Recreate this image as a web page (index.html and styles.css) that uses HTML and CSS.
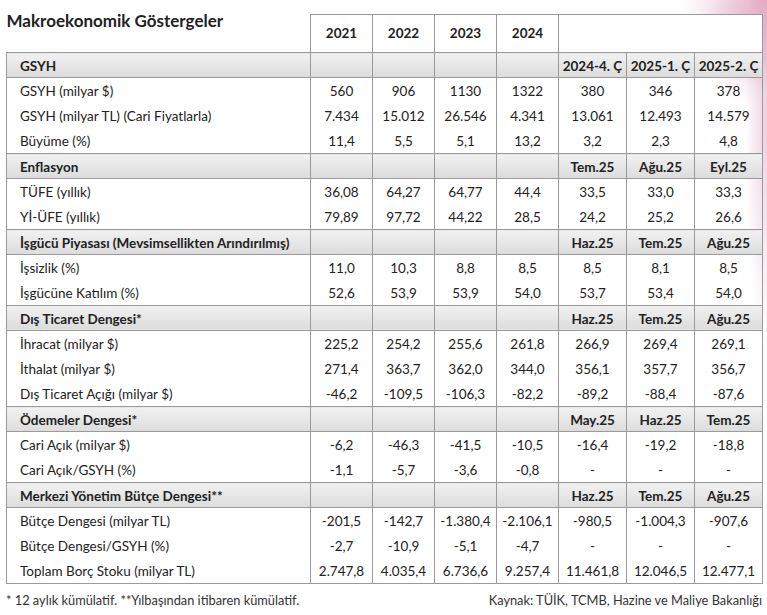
FILE: index.html
```html
<!DOCTYPE html>
<html lang="tr">
<head>
<meta charset="utf-8">
<title>Makroekonomik Göstergeler</title>
<link rel="stylesheet" href="styles.css">
</head>
<body>
<div class="page">
  <div class="deco"></div>
  <table class="macro">
    <colgroup>
      <col class="c-label">
      <col class="c-year"><col class="c-year"><col class="c-year"><col class="c-year">
      <col class="c-q"><col class="c-q"><col class="c-q">
    </colgroup>
    <thead>
      <tr class="years">
        <th class="title-cell"><h1 class="title">Makroekonomik Göstergeler</h1></th>
        <th>2021</th><th>2022</th><th>2023</th><th>2024</th>
        <th colspan="3"></th>
      </tr>
    </thead>
    <tbody>
      <tr class="sec"><th>GSYH</th><td></td><td></td><td></td><td></td><td>2024-4. Ç</td><td>2025-1. Ç</td><td>2025-2. Ç</td></tr>
      <tr><th>GSYH (milyar $)</th><td>560</td><td>906</td><td>1130</td><td>1322</td><td>380</td><td>346</td><td>378</td></tr>
      <tr><th>GSYH (milyar TL) (Cari Fiyatlarla)</th><td>7.434</td><td>15.012</td><td>26.546</td><td>4.341</td><td>13.061</td><td>12.493</td><td>14.579</td></tr>
      <tr><th>Büyüme (%)</th><td>11,4</td><td>5,5</td><td>5,1</td><td>13,2</td><td>3,2</td><td>2,3</td><td>4,8</td></tr>

      <tr class="sec"><th>Enflasyon</th><td></td><td></td><td></td><td></td><td>Tem.25</td><td>Ağu.25</td><td>Eyl.25</td></tr>
      <tr><th>TÜFE (yıllık)</th><td>36,08</td><td>64,27</td><td>64,77</td><td>44,4</td><td>33,5</td><td>33,0</td><td>33,3</td></tr>
      <tr><th>Yİ-ÜFE (yıllık)</th><td>79,89</td><td>97,72</td><td>44,22</td><td>28,5</td><td>24,2</td><td>25,2</td><td>26,6</td></tr>

      <tr class="sec"><th>İşgücü Piyasası (Mevsimsellikten Arındırılmış)</th><td></td><td></td><td></td><td></td><td>Haz.25</td><td>Tem.25</td><td>Ağu.25</td></tr>
      <tr><th>İşsizlik (%)</th><td>11,0</td><td>10,3</td><td>8,8</td><td>8,5</td><td>8,5</td><td>8,1</td><td>8,5</td></tr>
      <tr><th>İşgücüne Katılım (%)</th><td>52,6</td><td>53,9</td><td>53,9</td><td>54,0</td><td>53,7</td><td>53,4</td><td>54,0</td></tr>

      <tr class="sec"><th>Dış Ticaret Dengesi*</th><td></td><td></td><td></td><td></td><td>Haz.25</td><td>Tem.25</td><td>Ağu.25</td></tr>
      <tr><th>İhracat (milyar $)</th><td>225,2</td><td>254,2</td><td>255,6</td><td>261,8</td><td>266,9</td><td>269,4</td><td>269,1</td></tr>
      <tr><th>İthalat (milyar $)</th><td>271,4</td><td>363,7</td><td>362,0</td><td>344,0</td><td>356,1</td><td>357,7</td><td>356,7</td></tr>
      <tr><th>Dış Ticaret Açığı (milyar $)</th><td>-46,2</td><td>-109,5</td><td>-106,3</td><td>-82,2</td><td>-89,2</td><td>-88,4</td><td>-87,6</td></tr>

      <tr class="sec"><th>Ödemeler Dengesi*</th><td></td><td></td><td></td><td></td><td>May.25</td><td>Haz.25</td><td>Tem.25</td></tr>
      <tr><th>Cari Açık (milyar $)</th><td>-6,2</td><td>-46,3</td><td>-41,5</td><td>-10,5</td><td>-16,4</td><td>-19,2</td><td>-18,8</td></tr>
      <tr><th>Cari Açık/GSYH (%)</th><td>-1,1</td><td>-5,7</td><td>-3,6</td><td>-0,8</td><td>-</td><td>-</td><td>-</td></tr>

      <tr class="sec"><th>Merkezi Yönetim Bütçe Dengesi**</th><td></td><td></td><td></td><td></td><td>Haz.25</td><td>Tem.25</td><td>Ağu.25</td></tr>
      <tr><th>Bütçe Dengesi (milyar TL)</th><td>-201,5</td><td>-142,7</td><td>-1.380,4</td><td>-2.106,1</td><td>-980,5</td><td>-1.004,3</td><td>-907,6</td></tr>
      <tr><th>Bütçe Dengesi/GSYH (%)</th><td>-2,7</td><td>-10,9</td><td>-5,1</td><td>-4,7</td><td>-</td><td>-</td><td>-</td></tr>
      <tr><th>Toplam Borç Stoku (milyar TL)</th><td>2.747,8</td><td>4.035,4</td><td>6.736,6</td><td>9.257,4</td><td>11.461,8</td><td>12.046,5</td><td>12.477,1</td></tr>
    </tbody>
  </table>
  <div class="notes">
    <span>* 12 aylık kümülatif. **Yılbaşından itibaren kümülatif.</span>
    <span>Kaynak: TÜİK, TCMB, Hazine ve Maliye Bakanlığı</span>
  </div>
</div>
</body>
</html>
```

FILE: styles.css
```css
* { box-sizing: border-box; }
html, body { margin: 0; padding: 0; background: #ffffff; }
body {
  font-family: "Lato", "Liberation Sans", sans-serif;
  color: #222222;
  width: 767px;
  height: 615px;
  overflow: hidden;
}
.page {
  position: relative;
  padding: 14px 5px 0 6px;
}
.deco {
  position: absolute;
  top: 0;
  right: 0;
  width: 130px;
  height: 340px;
  background:
    radial-gradient(ellipse 85px 90px at 100% 0%, rgba(215,135,170,0.6), rgba(215,135,170,0) 100%),
    radial-gradient(ellipse 45px 65px at 85% 12%, rgba(225,160,190,0.4), rgba(225,160,190,0) 100%),
    radial-gradient(ellipse 22px 230px at 100% 35%, rgba(220,160,190,0.5), rgba(220,160,190,0) 100%);
  pointer-events: none;
}
.macro {
  position: relative;
  border-collapse: collapse;
  table-layout: fixed;
  width: 756px;
  font-size: 13.5px;
}
.c-label { width: 304px; }
.c-year { width: 62px; }
.c-q { width: 68px; }
.macro th, .macro td {
  padding: 2px 0 0 0;
  height: 25.3px;
  line-height: 15px;
  white-space: nowrap;
  font-weight: normal;
}
.macro td {
  text-align: center;
  border-left: 1px solid #9a9a9a;
  border-right: 1px solid #9a9a9a;
}
.macro tbody th {
  text-align: left;
  padding-left: 13px;
  border-left: 1px solid #9a9a9a;
}
.years th {
  height: 38px;
  font-weight: bold;
  text-align: center;
  border: 1px solid #9a9a9a;
  border-bottom: none;
  padding-top: 0;
  background: #ffffff;
}
.years th.title-cell {
  border: none;
  border-bottom: 1px solid #9a9a9a;
  text-align: left;
  vertical-align: top;
  padding: 0;
  background: transparent;
}
.title {
  margin: -4px 0 0 0;
  font-size: 17px;
  font-weight: bold;
  line-height: 20px;
  color: #222222;
}
.sec th, .sec td {
  font-weight: bold;
  background: linear-gradient(#f1f1f1, #dcdcdc);
  border-top: 1px solid #9a9a9a;
  border-bottom: 1px solid #9a9a9a;
}
.macro tbody tr:last-child th,
.macro tbody tr:last-child td {
  border-bottom: 1px solid #9a9a9a;
}
.macro tbody tr > *:last-child { border-right: 1px solid #9a9a9a; }
.notes {
  display: flex;
  justify-content: space-between;
  font-size: 12.8px;
  margin-top: 8px;
  color: #333;
  width: 756px;
}
```
